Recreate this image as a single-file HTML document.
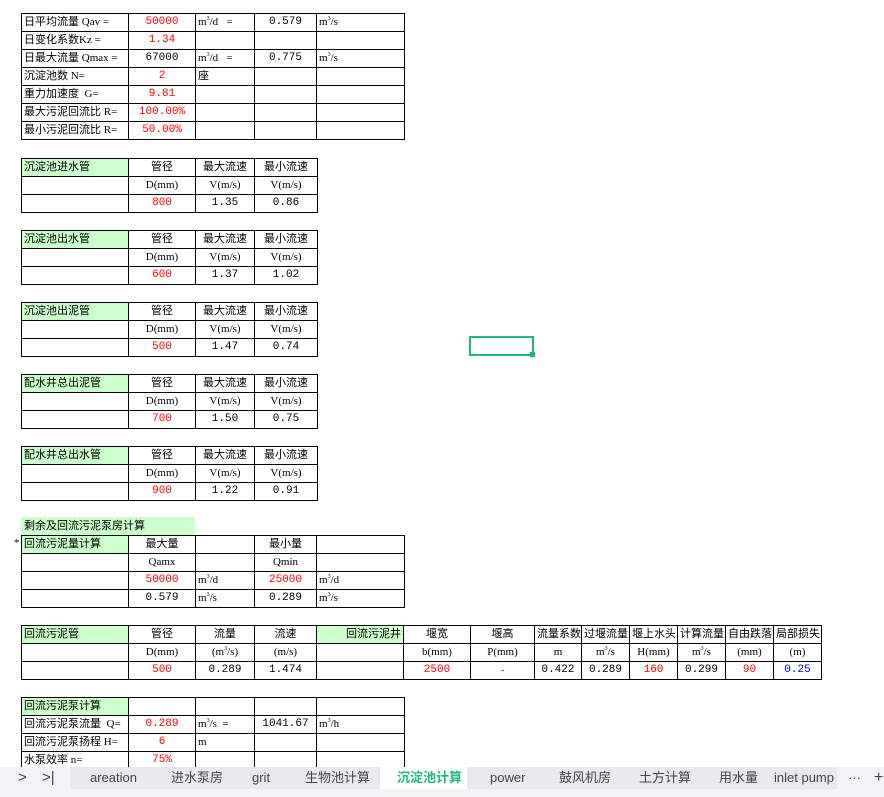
<!DOCTYPE html>
<html><head><meta charset="utf-8"><style>
body{margin:0;width:884px;height:797px;overflow:hidden;background:#fff;position:relative;font-family:"Liberation Serif","Noto Sans CJK SC",serif;font-size:11px;color:#000}
table{position:absolute;left:21px;border-collapse:collapse;table-layout:fixed}
td{border:1px solid #000;height:17px;padding:0 2px;white-space:nowrap;overflow:hidden;text-align:center;line-height:15px;vertical-align:middle}
td.l{text-align:left}
.g{background:#ccffcc}
.r{color:#ff0000}
.b{color:#0000ff}
.n{font-family:"Liberation Mono",monospace;font-size:11px;line-height:15px}
sup{font-size:6px;line-height:0;vertical-align:baseline;position:relative;top:-5px}
.tabs{position:absolute;left:0;top:767px;width:884px;height:22px;background:#e8e9ec;font-family:"Liberation Sans","Noto Sans CJK SC",sans-serif;font-size:13px;color:#444}
.tabs span{position:absolute;top:3px;line-height:16px;height:16px}
.bot{position:absolute;left:0;top:789px;width:884px;height:8px;background:#f3f3f5}
</style></head><body>

<table style="top:13px;width:383px">
<colgroup><col style="width:107px"><col style="width:67px"><col style="width:59px"><col style="width:62px"><col style="width:88px"></colgroup>
<tr><td class="l">日平均流量 Qav =</td><td class="r n">50000</td><td class="l">m<sup>3</sup>/d &nbsp; =</td><td class="n">0.579</td><td class="l">m<sup>3</sup>/s</td></tr>
<tr><td class="l">日变化系数Kz =</td><td class="r n">1.34</td><td></td><td></td><td></td></tr>
<tr><td class="l">日最大流量 Qmax =</td><td class="n">67000</td><td class="l">m<sup>3</sup>/d &nbsp; =</td><td class="n">0.775</td><td class="l">m<sup>3</sup>/s</td></tr>
<tr><td class="l">沉淀池数 N=</td><td class="r n">2</td><td class="l">座</td><td></td><td></td></tr>
<tr><td class="l">重力加速度 &nbsp;G=</td><td class="r n">9.81</td><td></td><td></td><td></td></tr>
<tr><td class="l">最大污泥回流比 R=</td><td class="r n">100.00%</td><td></td><td></td><td></td></tr>
<tr><td class="l">最小污泥回流比 R=</td><td class="r n">50.00%</td><td></td><td></td><td></td></tr>
</table>

<table style="top:158px;width:296px">
<colgroup><col style="width:107px"><col style="width:67px"><col style="width:59px"><col style="width:63px"></colgroup>
<tr><td class="l g">沉淀池进水管</td><td>管径</td><td>最大流速</td><td>最小流速</td></tr>
<tr><td></td><td>D(mm)</td><td>V(m/s)</td><td>V(m/s)</td></tr>
<tr><td></td><td class="r n">800</td><td class="n">1.35</td><td class="n">0.86</td></tr>
</table>
<table style="top:230px;width:296px">
<colgroup><col style="width:107px"><col style="width:67px"><col style="width:59px"><col style="width:63px"></colgroup>
<tr><td class="l g">沉淀池出水管</td><td>管径</td><td>最大流速</td><td>最小流速</td></tr>
<tr><td></td><td>D(mm)</td><td>V(m/s)</td><td>V(m/s)</td></tr>
<tr><td></td><td class="r n">600</td><td class="n">1.37</td><td class="n">1.02</td></tr>
</table>
<table style="top:302px;width:296px">
<colgroup><col style="width:107px"><col style="width:67px"><col style="width:59px"><col style="width:63px"></colgroup>
<tr><td class="l g">沉淀池出泥管</td><td>管径</td><td>最大流速</td><td>最小流速</td></tr>
<tr><td></td><td>D(mm)</td><td>V(m/s)</td><td>V(m/s)</td></tr>
<tr><td></td><td class="r n">500</td><td class="n">1.47</td><td class="n">0.74</td></tr>
</table>
<table style="top:374px;width:296px">
<colgroup><col style="width:107px"><col style="width:67px"><col style="width:59px"><col style="width:63px"></colgroup>
<tr><td class="l g">配水井总出泥管</td><td>管径</td><td>最大流速</td><td>最小流速</td></tr>
<tr><td></td><td>D(mm)</td><td>V(m/s)</td><td>V(m/s)</td></tr>
<tr><td></td><td class="r n">700</td><td class="n">1.50</td><td class="n">0.75</td></tr>
</table>
<table style="top:446px;width:296px">
<colgroup><col style="width:107px"><col style="width:67px"><col style="width:59px"><col style="width:63px"></colgroup>
<tr><td class="l g">配水井总出水管</td><td>管径</td><td>最大流速</td><td>最小流速</td></tr>
<tr><td></td><td>D(mm)</td><td>V(m/s)</td><td>V(m/s)</td></tr>
<tr><td></td><td class="r n">900</td><td class="n">1.22</td><td class="n">0.91</td></tr>
</table>

<div class="g" style="position:absolute;left:21px;top:517px;width:171px;height:18px;line-height:18px;padding-left:3px">剩余及回流污泥泵房计算</div>
<div style="position:absolute;left:14px;top:537px">*</div>
<table style="top:535px;width:383px">
<colgroup><col style="width:107px"><col style="width:67px"><col style="width:59px"><col style="width:62px"><col style="width:88px"></colgroup>
<tr><td class="l g">回流污泥量计算</td><td>最大量</td><td></td><td>最小量</td><td></td></tr>
<tr><td></td><td>Qamx</td><td></td><td>Qmin</td><td></td></tr>
<tr><td></td><td class="r n">50000</td><td class="l">m<sup>3</sup>/d</td><td class="r n">25000</td><td class="l">m<sup>3</sup>/d</td></tr>
<tr><td></td><td class="n">0.579</td><td class="l">m<sup>3</sup>/s</td><td class="n">0.289</td><td class="l">m<sup>3</sup>/s</td></tr>
</table>

<table style="top:625px;width:800px">
<colgroup><col style="width:107px"><col style="width:67px"><col style="width:59px"><col style="width:62px"><col style="width:87px"><col style="width:67px"><col style="width:64px"><col style="width:47px"><col style="width:48px"><col style="width:48px"><col style="width:48px"><col style="width:48px"><col style="width:48px"></colgroup>
<tr><td class="l g">回流污泥管</td><td>管径</td><td>流量</td><td>流速</td><td class="g" style="text-align:right">回流污泥井</td><td>堰宽</td><td>堰高</td><td>流量系数</td><td>过堰流量</td><td>堰上水头</td><td>计算流量</td><td>自由跌落</td><td>局部损失</td></tr>
<tr><td></td><td>D(mm)</td><td>(m<sup>3</sup>/s)</td><td>(m/s)</td><td></td><td>b(mm)</td><td>P(mm)</td><td>m</td><td>m<sup>3</sup>/s</td><td>H(mm)</td><td>m<sup>3</sup>/s</td><td>(mm)</td><td>(m)</td></tr>
<tr><td></td><td class="r n">500</td><td class="n">0.289</td><td class="n">1.474</td><td></td><td class="r n">2500</td><td class="r">-</td><td class="n">0.422</td><td class="n">0.289</td><td class="r n">160</td><td class="n">0.299</td><td class="r n">90</td><td class="b n">0.25</td></tr>
</table>

<table style="top:697px;width:383px">
<colgroup><col style="width:107px"><col style="width:67px"><col style="width:59px"><col style="width:62px"><col style="width:88px"></colgroup>
<tr><td class="l g">回流污泥泵计算</td><td></td><td></td><td></td><td></td></tr>
<tr><td class="l">回流污泥泵流量 &nbsp;Q=</td><td class="r n">0.289</td><td class="l">m<sup>3</sup>/s &nbsp;=</td><td class="n">1041.67</td><td class="l">m<sup>3</sup>/h</td></tr>
<tr><td class="l">回流污泥泵扬程 H=</td><td class="r n">6</td><td class="l">m</td><td></td><td></td></tr>
<tr><td class="l">水泵效率 n=</td><td class="r n">75%</td><td></td><td></td><td></td></tr>
</table>

<div style="position:absolute;left:469px;top:336px;width:61px;height:16px;border:2px solid #21b77a"></div>
<div style="position:absolute;left:530px;top:352px;width:5px;height:5px;background:#21b77a"></div>

<div class="tabs">
<div style="position:absolute;left:0;top:0;width:70px;height:22px;background:#f3f3f5"></div>
<span style="left:18px;font-size:15px">&gt;</span><span style="left:42px;font-size:15px">&gt;|</span>
<span style="left:90px">areation</span>
<span style="left:171px">进水泵房</span>
<span style="left:252px">grit</span>
<span style="left:305px">生物池计算</span>
<div style="position:absolute;left:380px;top:0;width:87px;height:22px;background:#fff"></div>
<span style="left:397px;color:#21b77a;font-weight:bold">沉淀池计算</span>
<span style="left:490px">power</span>
<span style="left:559px">鼓风机房</span>
<span style="left:639px">土方计算</span>
<span style="left:719px">用水量</span>
<span style="left:774px">inlet pump</span>
<div style="position:absolute;left:837px;top:0;width:47px;height:22px;background:#f3f3f5"></div>
<span style="left:848px">···</span><span style="left:874px;font-size:16px">+</span>
</div>
<div class="bot"></div>
</body></html>
